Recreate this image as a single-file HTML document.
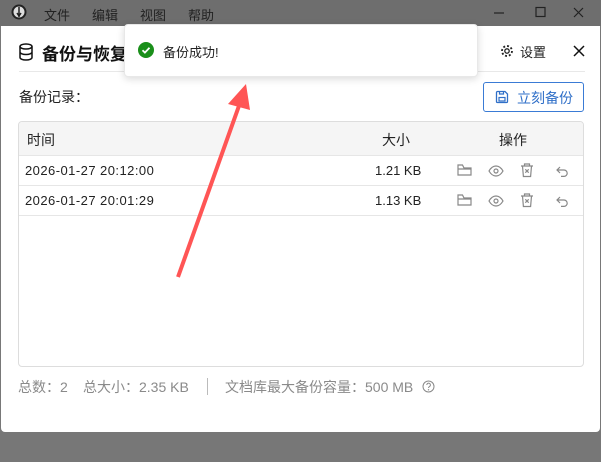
<!DOCTYPE html>
<html><head><meta charset="utf-8"><style>
*{box-sizing:border-box;margin:0;padding:0}
body{width:601px;height:462px;overflow:hidden;background:#787878;font-family:"Liberation Sans","Noto Sans CJK SC",sans-serif;position:relative;color:#222}
.tb{position:absolute;left:0;top:0;width:601px;height:26px;background:#6e6e6e;color:#222;font-size:13px}
.tb span{position:absolute;top:5px}
.dlg{position:absolute;left:1px;top:26px;width:599px;height:406px;background:#fff;border-radius:0 0 4px 4px}
.bot{position:absolute;left:0;top:432px;width:601px;height:30px;background:#777}
.abs{position:absolute}
.hdr{font-size:17px;font-weight:bold;color:#111}
.tbl{position:absolute;left:18px;top:121px;width:566px;height:246px;border:1px solid #ddd;border-radius:4px;overflow:hidden}
.row{position:absolute;left:0;width:100%;border-bottom:1px solid #e6e6e6;font-size:13px}
.row span{position:absolute}
.toast{position:absolute;left:124px;top:24px;width:354px;height:53px;background:#fff;border-radius:4px;box-shadow:0 2px 8px rgba(0,0,0,.15);border:1px solid #e8e8e8}
.ft{position:absolute;top:377px;font-size:14px;color:#8a8a8a;white-space:nowrap}
</style></head><body>
<div class="tb">
<svg class="abs" style="left:11px;top:4px" width="16" height="16"><circle cx="8" cy="8" r="7.5" fill="#222"/><circle cx="8" cy="8" r="5.5" fill="#ddd"/><path d="M8 3v10M6 9l2 3 2-3" stroke="#222" stroke-width="1.5" fill="none"/></svg>
<span style="left:44px">文件</span><span style="left:92px">编辑</span><span style="left:140px">视图</span><span style="left:188px">帮助</span>
<svg class="abs" style="left:490px;top:6px" width="100" height="14"><path d="M4 7h10" stroke="#222" stroke-width="1.2"/><rect x="46" y="1.5" width="9" height="9" fill="none" stroke="#222" stroke-width="1.2"/><path d="M84 2l9 9M93 2l-9 9" stroke="#222" stroke-width="1.2"/></svg>
</div>
<div class="dlg">
<svg class="abs" style="left:18px;top:17px" width="14" height="18"><ellipse cx="7" cy="3.5" rx="6" ry="2.5" fill="none" stroke="#111" stroke-width="1.5"/><path d="M1 3.5v11c0 1.4 2.7 2.5 6 2.5s6-1.1 6-2.5v-11M1 9c0 1.4 2.7 2.5 6 2.5S13 10.4 13 9" fill="none" stroke="#111" stroke-width="1.5"/></svg>
<div class="abs hdr" style="left:41px;top:14px">备份与恢复</div>
<svg class="abs" style="left:499px;top:18px" width="14" height="14"><circle cx="7" cy="7" r="2.2" fill="none" stroke="#222" stroke-width="1.3"/><circle cx="7" cy="7" r="5" fill="none" stroke="#222" stroke-width="1.8" stroke-dasharray="2 1.9"/></svg>
<div class="abs" style="left:519px;top:16px;font-size:13px">设置</div>
<svg class="abs" style="left:572px;top:19px" width="12" height="12"><path d="M1 1l10 10M11 1L1 11" stroke="#111" stroke-width="1.5"/></svg>
<div class="abs" style="left:18px;top:45px;width:566px;height:1px;background:#e8e8e8"></div>
<div class="abs" style="left:18px;top:61px;font-size:14px">备份记录：</div>
<div class="abs" style="left:482px;top:56px;width:101px;height:30px;border:1px solid #3a7bd5;border-radius:3px;color:#2f6fc8;font-size:14px;padding:5px 0 0 33px">立刻备份</div>
<svg class="abs" style="left:494px;top:64px" width="14" height="14"><path d="M1.5 2.5a1 1 0 011-1h7.5l2.5 2.5v7.5a1 1 0 01-1 1h-9a1 1 0 01-1-1z" fill="none" stroke="#2f6fc8" stroke-width="1.3"/><rect x="4" y="7.5" width="6" height="3.5" fill="none" stroke="#2f6fc8" stroke-width="1.2"/><path d="M4.5 1.5v2.5h4V1.5" fill="none" stroke="#2f6fc8" stroke-width="1.2"/></svg>
</div>
<div class="tbl">
<div class="row" style="top:0;height:34px;background:#f5f5f5;font-size:14px"><span style="left:8px;top:8px">时间</span><span style="left:363px;top:8px">大小</span><span style="left:480px;top:8px">操作</span></div>
<div class="row" style="top:34px;height:30px"><span style="left:6px;top:7px;letter-spacing:0.45px">2026-01-27 20:12:00</span><span style="left:356px;top:7px">1.21 KB</span></div>
<div class="row" style="top:64px;height:30px"><span style="left:6px;top:7px;letter-spacing:0.45px">2026-01-27 20:01:29</span><span style="left:356px;top:7px">1.13 KB</span></div>
</div>
<svg class="abs" style="left:455px;top:161px" width="120" height="50">
<g id="ic" fill="none" stroke="#888" stroke-width="1.2">
<path d="M3 4v10h13V7H9L7.5 4z M3 8h13"/>
<path d="M34 10c2.3-4 4.6-5 7-5s4.7 1 7 5c-2.3 4-4.6 5-7 5s-4.7-1-7-5z"/><circle cx="41" cy="10" r="2"/>
<path d="M66 5h12M69.5 5V3h5v2M67.5 5l.9 10.5h7.2l.9-10.5M70.3 8.3l3.4 3.4M73.7 8.3l-3.4 3.4"/>
<path d="M102 9h7a3.2 3.2 0 010 6.4h-3M105 6L102 9l3 3"/>
</g>
<use href="#ic" y="30"/>
</svg>
<div class="ft" style="left:18px">总数：2</div>
<div class="ft" style="left:83px">总大小：2.35 KB</div>
<div class="abs" style="left:207px;top:378px;width:1px;height:17px;background:#bbb"></div>
<div class="ft" style="left:225px">文档库最大备份容量：500 MB</div>
<svg class="abs" style="left:422px;top:380px" width="13" height="13"><circle cx="6.5" cy="6.5" r="5.5" fill="none" stroke="#888" stroke-width="1"/><path d="M4.8 5a1.8 1.8 0 113 1.3c-.8.5-1.3.8-1.3 1.7" fill="none" stroke="#888" stroke-width="1"/><circle cx="6.5" cy="9.8" r=".7" fill="#888"/></svg>
<div class="bot"></div>
<div class="toast">
<svg class="abs" style="left:13px;top:17px" width="16" height="16"><circle cx="8" cy="8" r="8" fill="#1a8f1a"/><path d="M4.5 8.2l2.4 2.4 4.6-4.8" stroke="#fff" stroke-width="1.8" fill="none"/></svg>
<div class="abs" style="left:38px;top:17px;font-size:13px;color:#222">备份成功!</div>
</div>
<svg class="abs" style="left:0;top:0" width="601" height="462"><path d="M178 277L240 103" stroke="#f55" stroke-width="4" fill="none"/><path d="M246 84L228 104L250 110z" fill="#f55"/></svg>
</body></html>
